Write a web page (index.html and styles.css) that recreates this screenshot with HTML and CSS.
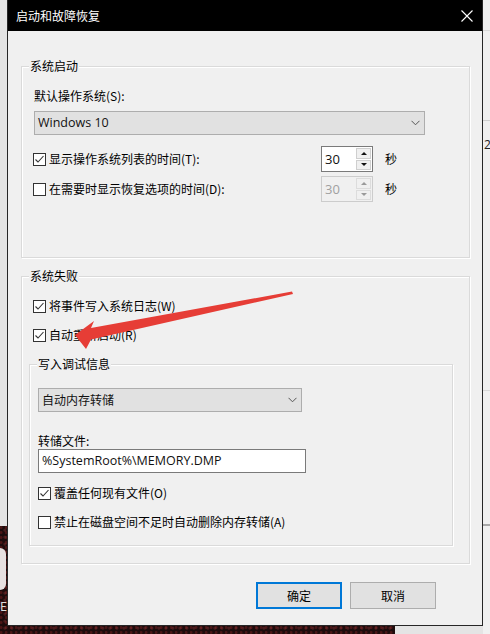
FILE: index.html
```html
<!DOCTYPE html>
<html lang="zh-CN">
<head>
<meta charset="utf-8">
<title>启动和故障恢复</title>
<link rel="stylesheet" href="styles.css">
</head>
<body>
<div class="desktop">
  <div class="bg-photo"><span class="photo-blob"></span><span class="photo-text">E</span></div>
  <div class="bg-right"><span class="bg-right-text">2.</span></div>

  <div class="dialog">
    <div class="titlebar">
      <span class="title">启动和故障恢复</span>
      <svg class="close" width="12" height="12" viewBox="0 0 12 12"><path d="M0.5 0.5 L11.5 11.5 M11.5 0.5 L0.5 11.5" stroke="#fff" stroke-width="1.1" fill="none"/></svg>
    </div>
    <div class="body">
      <div class="group g-startup">
        <span class="legend">系统启动</span>
        <div class="field-label">默认操作系统(S):</div>
        <div class="select select-os">
          <span class="select-text">Windows 10</span>
          <svg class="chev" width="9" height="6" viewBox="0 0 9 6"><path d="M0.5 0.8 L4.5 4.8 L8.5 0.8" stroke="#555" stroke-width="1" fill="none"/></svg>
        </div>
        <div class="row row-first">
          <div class="check-wrap">
            <span class="cb"><svg width="11" height="11" viewBox="0 0 11 11"><path d="M1.5 5.5 L4 8 L9.5 2" stroke="#333" stroke-width="1.1" fill="none"/></svg></span>
            <span>显示操作系统列表的时间(T):</span>
          </div>
          <div class="spin">
            <span class="spin-val">30</span>
            <span class="spin-btns"><span class="sb"><span class="tri-up"></span></span><span class="sb"><span class="tri-down"></span></span></span>
          </div>
          <span class="unit">秒</span>
        </div>
        <div class="row row-second">
          <div class="check-wrap">
            <span class="cb"></span>
            <span>在需要时显示恢复选项的时间(D):</span>
          </div>
          <div class="spin disabled">
            <span class="spin-val">30</span>
            <span class="spin-btns"><span class="sb"><span class="tri-up"></span></span><span class="sb"><span class="tri-down"></span></span></span>
          </div>
          <span class="unit">秒</span>
        </div>
      </div>

      <div class="group g-failure">
        <span class="legend">系统失败</span>
        <div class="crow">
          <span class="cb"><svg width="11" height="11" viewBox="0 0 11 11"><path d="M1.5 5.5 L4 8 L9.5 2" stroke="#333" stroke-width="1.1" fill="none"/></svg></span>
          <span>将事件写入系统日志(W)</span>
        </div>
        <div class="crow crow-next">
          <span class="cb"><svg width="11" height="11" viewBox="0 0 11 11"><path d="M1.5 5.5 L4 8 L9.5 2" stroke="#333" stroke-width="1.1" fill="none"/></svg></span>
          <span>自动重新启动(R)</span>
        </div>

        <div class="group g-debug">
          <span class="legend">写入调试信息</span>
          <div class="select select-dump">
            <span class="select-cjk">自动内存转储</span>
            <svg class="chev" width="9" height="6" viewBox="0 0 9 6"><path d="M0.5 0.8 L4.5 4.8 L8.5 0.8" stroke="#555" stroke-width="1" fill="none"/></svg>
          </div>
          <div class="field-label label-dump">转储文件:</div>
          <div class="textbox">%SystemRoot%\MEMORY.DMP</div>
          <div class="crow crow-inner crow-overwrite">
            <span class="cb"><svg width="11" height="11" viewBox="0 0 11 11"><path d="M1.5 5.5 L4 8 L9.5 2" stroke="#333" stroke-width="1.1" fill="none"/></svg></span>
            <span>覆盖任何现有文件(O)</span>
          </div>
          <div class="crow crow-inner crow-next">
            <span class="cb"></span>
            <span>禁止在磁盘空间不足时自动删除内存转储(A)</span>
          </div>
        </div>
      </div>

      <div class="actions">
        <span class="btn primary">确定</span>
        <span class="btn">取消</span>
      </div>
    </div>
  </div>

  <svg class="arrow" width="490" height="634" viewBox="0 0 490 634">
    <polygon points="75,335 86,349 91,339.5 293,294 292,291.5 91,328 94,321" fill="#e63d36"/>
  </svg>
</div>
</body>
</html>
```

FILE: styles.css
```css
html, body {
  margin: 0;
  padding: 0;
}

body {
  font-family: "Noto Sans CJK SC", "Noto Sans", sans-serif;
  font-size: 12px;
  line-height: 16px;
  color: #000;
}

.desktop {
  position: relative;
  width: 490px;
  height: 634px;
  overflow: hidden;
  background: #e4e4e4;
}

.bg-photo {
  position: absolute;
  left: 0;
  top: 526px;
  width: 395px;
  height: 108px;
  background:
    radial-gradient(circle at 20% 30%, rgba(160, 40, 40, 0.35) 0 1px, transparent 2px),
    radial-gradient(circle at 70% 60%, rgba(200, 80, 80, 0.25) 0 1px, transparent 2px),
    #1d0c0d;
  background-size: 5px 5px, 7px 7px, auto;
}

.photo-blob {
  position: absolute;
  left: -6px;
  top: 22px;
  width: 12px;
  height: 42px;
  border-radius: 6px;
  background: #e6e0e0;
}

.photo-text {
  position: absolute;
  left: 0;
  top: 72px;
  color: #ddd;
  font-size: 12px;
}

.bg-right {
  position: absolute;
  left: 483px;
  top: 0;
  width: 7px;
  height: 634px;
  overflow: hidden;
  background:
    linear-gradient(#d8d8d8, #d8d8d8) 0 30px / 100% 1px no-repeat,
    linear-gradient(#cfcfcf, #cfcfcf) 0 120px / 100% 1px no-repeat,
    linear-gradient(#d8d8d8, #d8d8d8) 0 390px / 100% 1px no-repeat,
    linear-gradient(#a8a8a8, #a8a8a8) 0 524px / 100% 2px no-repeat,
    #f0f0f0;
}

.bg-right-text {
  position: absolute;
  left: 1px;
  top: 137px;
  font-family: "Open Sans", sans-serif;
  font-size: 12px;
  color: #222;
}

.dialog {
  position: absolute;
  left: 7px;
  top: 0;
  width: 476px;
  height: 626px;
  box-sizing: border-box;
  border: 1px solid #262626;
  border-top: 0;
  background: #f0f0f0;
  display: flex;
  flex-direction: column;
}

.titlebar {
  flex: none;
  height: 31px;
  background: #000;
  color: #fff;
  display: flex;
  align-items: center;
  justify-content: space-between;
  padding: 0 9px 0 8px;
}

.title {
  font-size: 12px;
  line-height: 16px;
}

.close {
  display: block;
  margin-top: 1px;
}

.body {
  padding: 35px 12px 0 13px;
  display: flex;
  flex-direction: column;
}

.group {
  position: relative;
  box-sizing: border-box;
  border: 1px solid #dadada;
  box-shadow: 1px 1px 0 #fff, inset 1px 1px 0 #fff;
}

.legend {
  position: absolute;
  top: -9px;
  left: 7px;
  padding: 0 1px;
  background: #f0f0f0;
  line-height: 16px;
}

.g-startup {
  height: 192px;
  padding: 21px 0 0 12px;
}

.field-label {
  line-height: 16px;
}

.select {
  box-sizing: border-box;
  height: 24px;
  border: 1px solid #adadad;
  background: #e1e1e1;
  display: flex;
  align-items: center;
  justify-content: space-between;
  padding: 0 4px 0 3px;
}

.select-os {
  margin-top: 7px;
  width: 391px;
}

.select-text {
  font-family: "Open Sans", sans-serif;
  font-size: 12.5px;
  color: #111;
}

.select-cjk {
  color: #111;
}

.chev {
  display: block;
}

.row {
  display: flex;
  align-items: center;
  height: 26px;
  margin-left: -1px;
}

.row-first {
  margin-top: 11px;
}

.row-second {
  margin-top: 4px;
}

.check-wrap {
  flex: none;
  width: 288px;
  display: flex;
  align-items: center;
  gap: 3px;
}

.cb {
  flex: none;
  width: 13px;
  height: 13px;
  box-sizing: border-box;
  border: 1px solid #333;
  background: #fff;
  display: flex;
  align-items: center;
  justify-content: center;
}

.cb svg {
  display: block;
}

.spin {
  flex: none;
  box-sizing: border-box;
  width: 52px;
  height: 26px;
  border: 1px solid #7a7a7a;
  background: #fff;
  display: flex;
  justify-content: space-between;
  padding: 1px 1px 1px 0;
}

.spin-val {
  font-family: "Open Sans", sans-serif;
  font-size: 13px;
  line-height: 22px;
  padding-left: 3px;
  color: #111;
}

.spin-btns {
  width: 15px;
  display: flex;
  flex-direction: column;
  gap: 1px;
}

.sb {
  flex: 1;
  box-sizing: border-box;
  border: 1px solid #cfcfcf;
  background: #f0f0f0;
  display: flex;
  align-items: center;
  justify-content: center;
}

.tri-up {
  width: 0;
  height: 0;
  border-left: 3px solid transparent;
  border-right: 3px solid transparent;
  border-bottom: 3px solid #111;
}

.tri-down {
  width: 0;
  height: 0;
  border-left: 3px solid transparent;
  border-right: 3px solid transparent;
  border-top: 3px solid #111;
}

.spin.disabled {
  border-color: #cccccc;
  background: #f0f0f0;
}

.spin.disabled .spin-val {
  color: #a0a0a0;
}

.spin.disabled .sb {
  border-color: #dcdcdc;
}

.spin.disabled .tri-up {
  border-bottom-color: #9a9a9a;
}

.spin.disabled .tri-down {
  border-top-color: #9a9a9a;
}

.unit {
  margin-left: 12px;
}

.g-failure {
  margin-top: 18px;
  height: 288px;
  padding: 21px 0 0 7px;
}

.crow {
  display: flex;
  align-items: center;
  gap: 3px;
  height: 16px;
  margin-left: 4px;
}

.crow-next {
  margin-top: 13px;
}

.g-debug {
  margin-top: 21px;
  width: 424px;
  height: 182px;
  padding: 23px 0 0 8px;
}

.select-dump {
  width: 264px;
}

.label-dump {
  margin-top: 21px;
}

.textbox {
  box-sizing: border-box;
  width: 268px;
  height: 24px;
  border: 1px solid #7a7a7a;
  background: #fff;
  padding-left: 3px;
  font-family: "Open Sans", sans-serif;
  font-size: 12.5px;
  line-height: 22px;
  color: #111;
}

.crow-inner {
  margin-left: 0;
}

.crow-overwrite {
  margin-top: 12px;
}

.actions {
  display: flex;
  justify-content: flex-end;
  gap: 8px;
  margin-top: 18px;
  padding-right: 34px;
}

.btn {
  box-sizing: border-box;
  width: 86px;
  height: 27px;
  border: 1px solid #adadad;
  background: #e1e1e1;
  display: flex;
  align-items: center;
  justify-content: center;
}

.btn.primary {
  border: 2px solid #0078d7;
}

.arrow {
  position: absolute;
  left: 0;
  top: 0;
  pointer-events: none;
}
```
